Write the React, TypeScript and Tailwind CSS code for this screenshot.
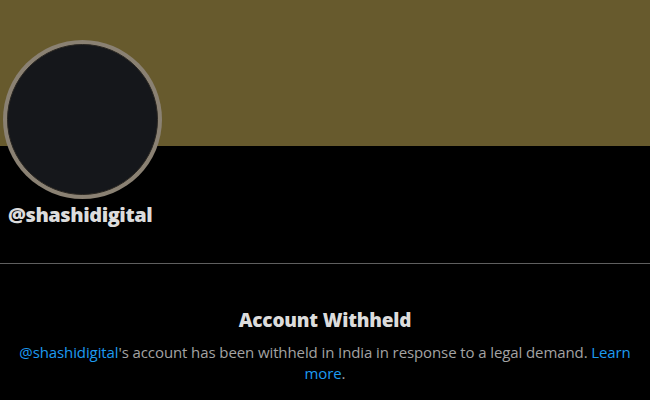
import React from "react";

export default function App() {
  return (
    <div className="relative w-[650px] h-[400px] bg-black overflow-hidden" style={{ fontFamily: '"Open Sans", "Noto Sans", sans-serif' }}>
      <div className="h-[146px] bg-[#675a2d]" />
      <div className="absolute left-[3px] top-[40px] w-[159px] h-[159px] rounded-full bg-[#8a8173] p-[4px]">
        <div className="w-full h-full rounded-full bg-[#15171b] border border-[#2a2722]" />
      </div>
      <div className="pt-[57px] pl-[8px] h-[117px]">
        <div className="text-[20px] font-extrabold leading-[24px] text-[#dcdcdc] tracking-[-0.45px]">@shashidigital</div>
      </div>
      <div className="h-px bg-[#5f5f5f]" />
      <div className="pt-[44px] flex flex-col items-center text-center px-[12px]">
        <div className="text-[19px] font-extrabold leading-[24px] text-[#dcdcdc] tracking-[-0.2px]">Account Withheld</div>
        <div className="mt-[10px] text-[15px] leading-[21px] text-[#a3a3a3] tracking-[-0.1px]">
          <span className="text-[#1d9bf0]">@shashidigital</span>'s account has been withheld in India in response to a legal demand.{" "}
          <span className="text-[#1d9bf0]">Learn more</span>.
        </div>
      </div>
    </div>
  );
}
